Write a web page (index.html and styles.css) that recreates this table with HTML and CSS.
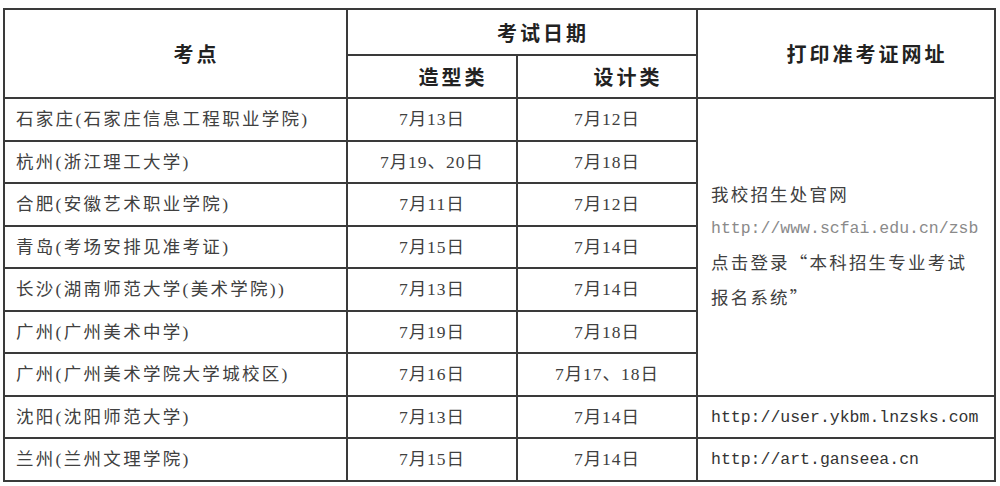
FILE: index.html
```html
<!DOCTYPE html>
<html lang="zh-CN">
<head>
<meta charset="utf-8">
<title>考点与考试日期</title>
<link rel="stylesheet" href="styles.css">
</head>
<body>
<table class="exam">
  <colgroup>
    <col class="c-site">
    <col class="c-a">
    <col class="c-b">
    <col class="c-url">
  </colgroup>
  <thead>
    <tr class="h1">
      <th rowspan="2">考点</th>
      <th colspan="2">考试日期</th>
      <th rowspan="2">打印准考证网址</th>
    </tr>
    <tr class="h2">
      <th>造型类</th>
      <th>设计类</th>
    </tr>
  </thead>
  <tbody>
    <tr>
      <td class="site">石家庄(石家庄信息工程职业学院)</td>
      <td class="date">7月13日</td>
      <td class="date">7月12日</td>
      <td class="url merged" rowspan="7">
        <div class="ln">我校招生处官网</div>
        <div class="ln mono gray">http://www.scfai.edu.cn/zsb</div>
        <div class="ln">点击登录<span class="q">“</span>本科招生专业考试</div>
        <div class="ln">报名系统<span class="q">”</span></div>
      </td>
    </tr>
    <tr>
      <td class="site">杭州(浙江理工大学)</td>
      <td class="date">7月19、20日</td>
      <td class="date">7月18日</td>
    </tr>
    <tr>
      <td class="site">合肥(安徽艺术职业学院)</td>
      <td class="date">7月11日</td>
      <td class="date">7月12日</td>
    </tr>
    <tr>
      <td class="site">青岛(考场安排见准考证)</td>
      <td class="date">7月15日</td>
      <td class="date">7月14日</td>
    </tr>
    <tr>
      <td class="site">长沙(湖南师范大学(美术学院))</td>
      <td class="date">7月13日</td>
      <td class="date">7月14日</td>
    </tr>
    <tr>
      <td class="site">广州(广州美术中学)</td>
      <td class="date">7月19日</td>
      <td class="date">7月18日</td>
    </tr>
    <tr>
      <td class="site">广州(广州美术学院大学城校区)</td>
      <td class="date">7月16日</td>
      <td class="date">7月17、18日</td>
    </tr>
    <tr>
      <td class="site">沈阳(沈阳师范大学)</td>
      <td class="date">7月13日</td>
      <td class="date">7月14日</td>
      <td class="url"><span class="mono">http://user.ykbm.lnzsks.com</span></td>
    </tr>
    <tr>
      <td class="site">兰州(兰州文理学院)</td>
      <td class="date">7月15日</td>
      <td class="date">7月14日</td>
      <td class="url"><span class="mono">http://art.ganseea.cn</span></td>
    </tr>
  </tbody>
</table>
</body>
</html>
```

FILE: styles.css
```css
html, body {
  margin: 0;
  padding: 0;
  background: #ffffff;
}

body {
  font-family: "Liberation Serif", "Noto Sans CJK SC", serif;
  color: #404040;
}

.exam {
  margin: 8px 0 0 3px;
  width: 991px;
  table-layout: fixed;
  border-collapse: collapse;
  border: 2px solid #2e2e2e;
}

.c-site { width: 343px; }
.c-a { width: 170px; }
.c-b { width: 180px; }
.c-url { width: 298px; }

.exam th,
.exam td {
  border: 2px solid #3a3a3a;
  padding: 0;
}

.exam th {
  font-family: "Noto Sans CJK SC", sans-serif;
  font-weight: 700;
  font-size: 20px;
  letter-spacing: 3px;
  color: #222222;
  text-align: center;
  padding-left: 42px;
}

.h1 { height: 46px; }
.h2 { height: 43px; }

.exam tbody tr { height: 42.5px; }

.exam td {
  font-size: 17.5px;
  line-height: 24px;
  vertical-align: middle;
}

.site {
  padding-left: 11px !important;
  letter-spacing: 2.3px;
  white-space: nowrap;
}

.date {
  text-align: center;
  font-size: 18px;
  letter-spacing: 1px;
  white-space: nowrap;
}

.url {
  padding-left: 13px !important;
  letter-spacing: 2.2px;
}

.merged .ln {
  line-height: 33px;
  white-space: nowrap;
}

.q {
  font-family: "Noto Sans CJK SC", sans-serif;
}

.mono {
  font-family: "Liberation Mono", monospace;
  font-size: 16.5px;
  letter-spacing: 0;
  color: #333333;
}

.gray {
  color: #8a8a8a;
}
```
